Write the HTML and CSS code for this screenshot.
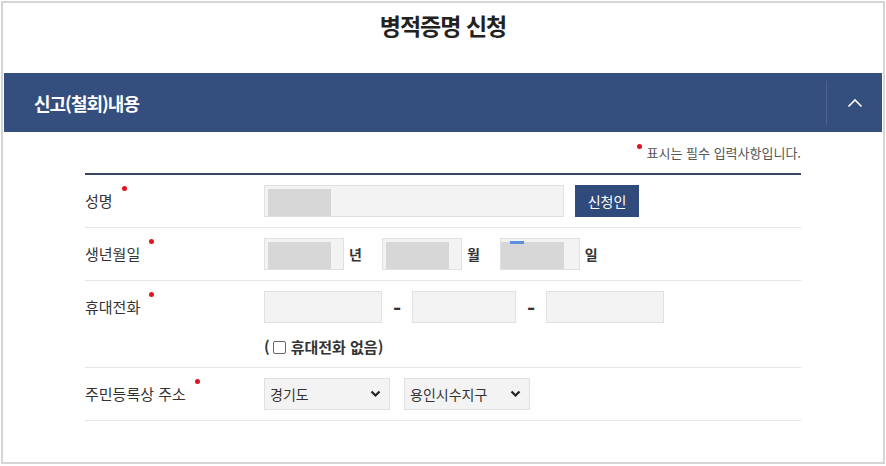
FILE: index.html
```html
<!DOCTYPE html>
<html lang="ko">
<head>
    <meta charset="UTF-8">
    <title>병적증명 신청</title>
    <link rel="stylesheet" href="styles.css">
</head>
<body>
    <div class="page-frame">
        <h1 class="page-title">병적증명 신청</h1>

        <div class="section-bar">
            <h2 class="section-title">신고(철회)내용</h2>
            <button class="toggle-btn" type="button">
                <svg width="16" height="10" viewBox="0 0 16 10"><path d="M1.5 8.5 L8 2 L14.5 8.5" fill="none" stroke="#fff" stroke-width="1.6"/></svg>
            </button>
        </div>

        <div class="form-area">
            <p class="required-note"><span class="req-dot"></span>표시는 필수 입력사항입니다.</p>

            <div class="form-row">
                <div class="form-label"><span class="req">성명</span></div>
                <div class="form-field">
                    <div class="text-input wide"><span class="mask"></span></div>
                    <button class="btn-applicant" type="button">신청인</button>
                </div>
            </div>

            <div class="form-row">
                <div class="form-label"><span class="req">생년월일</span></div>
                <div class="form-field">
                    <div class="text-input short"><span class="mask"></span></div>
                    <span class="unit">년</span>
                    <div class="text-input short"><span class="mask"></span></div>
                    <span class="unit">월</span>
                    <div class="text-input short flush"><span class="mask"><span class="caret-mark"></span></span></div>
                    <span class="unit">일</span>
                </div>
            </div>

            <div class="form-row">
                <div class="form-label"><span class="req">휴대전화</span></div>
                <div class="form-field column">
                    <div class="phone-line">
                        <div class="text-input phone-a"></div>
                        <span class="dash">-</span>
                        <div class="text-input phone-b"></div>
                        <span class="dash">-</span>
                        <div class="text-input phone-a"></div>
                    </div>
                    <label class="no-phone">(<span class="check-box"></span>휴대전화 없음)</label>
                </div>
            </div>

            <div class="form-row">
                <div class="form-label"><span class="req">주민등록상 주소</span></div>
                <div class="form-field">
                    <div class="select-box">
                        <span>경기도</span>
                        <svg width="11" height="8" viewBox="0 0 11 8"><path d="M1.5 1.5 L5.5 5.5 L9.5 1.5" fill="none" stroke="#222" stroke-width="2.2"/></svg>
                    </div>
                    <div class="select-box">
                        <span>용인시수지구</span>
                        <svg width="11" height="8" viewBox="0 0 11 8"><path d="M1.5 1.5 L5.5 5.5 L9.5 1.5" fill="none" stroke="#222" stroke-width="2.2"/></svg>
                    </div>
                </div>
            </div>
        </div>
    </div>
</body>
</html>
```

FILE: styles.css
```css
body {
    margin: 0;
    padding: 0;
    font-family: "Noto Sans CJK KR", "Noto Sans", sans-serif;
    color: #333;
    background: #fff;
}

.page-frame {
    margin: 1px 1px 0 1px;
    height: 463px;
    box-sizing: border-box;
    border: 2px solid #d5d5d5;
    padding: 0 1px 0 1px;
    overflow: hidden;
}

.page-title {
    margin: 0;
    height: 70px;
    padding-top: 6px;
    box-sizing: border-box;
    text-align: center;
    font-size: 23px;
    line-height: 32px;
    font-weight: 700;
    letter-spacing: -1px;
    color: #222;
}

.section-bar {
    display: flex;
    align-items: center;
    height: 59px;
    background: #344e7d;
}

.section-title {
    flex: 1;
    margin: 0;
    padding-left: 30px;
    font-size: 18px;
    font-weight: 700;
    letter-spacing: -1px;
    color: #fff;
}

.toggle-btn {
    width: 56px;
    height: 44px;
    padding: 0;
    border: none;
    border-left: 1px solid #4b628c;
    background: none;
    display: flex;
    align-items: center;
    justify-content: center;
    cursor: pointer;
}

.form-area {
    width: 716px;
    margin: 0 auto;
}

.required-note {
    margin: 0;
    padding: 11px 0 10px;
    line-height: 20px;
    text-align: right;
    font-size: 13px;
    color: #555;
    border-bottom: 2px solid #3b4760;
}

.req-dot {
    display: inline-block;
    width: 5px;
    height: 5px;
    margin-right: 5px;
    border-radius: 50%;
    background: #e0141e;
    vertical-align: 9px;
}

.form-row {
    display: flex;
    padding: 10px 0;
    border-bottom: 1px solid #e6e6e6;
}

.form-label {
    width: 179px;
    flex-shrink: 0;
    line-height: 32px;
    font-size: 15px;
    color: #333;
}

.req {
    position: relative;
    padding-right: 14px;
}

.req::after {
    content: '';
    position: absolute;
    right: 0;
    top: -4px;
    width: 5px;
    height: 5px;
    border-radius: 50%;
    background: #e0141e;
}

.form-field {
    display: flex;
    align-items: center;
}

.form-field.column {
    flex-direction: column;
    align-items: flex-start;
}

.text-input {
    height: 32px;
    box-sizing: border-box;
    border: 1px solid #e0e0e0;
    background: #f3f3f3;
    padding: 3px 0 0 3px;
}

.text-input.flush {
    padding-left: 0;
}

.text-input.wide {
    width: 300px;
}

.text-input.short {
    width: 80px;
}

.text-input.phone-a {
    width: 118px;
}

.text-input.phone-b {
    width: 104px;
}

.mask {
    display: block;
    position: relative;
    width: 63px;
    height: 27px;
    background: #d7d7d7;
}

.caret-mark {
    position: absolute;
    left: 9px;
    top: -1px;
    width: 14px;
    height: 3px;
    background: #5b8fe0;
}

.btn-applicant {
    margin-left: 11px;
    width: 64px;
    height: 32px;
    border: none;
    background: #2f4a7b;
    color: #fff;
    font-family: inherit;
    font-size: 14px;
    cursor: pointer;
}

.unit {
    margin: 0 20px 0 5px;
    font-size: 14px;
    font-weight: 700;
    color: #333;
}

.phone-line {
    display: flex;
    align-items: center;
}

.dash {
    width: 30px;
    text-align: center;
    font-size: 22px;
    font-weight: 700;
    color: #333;
    line-height: 32px;
}

.no-phone {
    display: flex;
    align-items: center;
    margin-top: 14px;
    line-height: 20px;
    font-size: 15px;
    font-weight: 700;
    color: #333;
}

.check-box {
    width: 11px;
    height: 11px;
    margin: 0 5px 0 3px;
    border: 1px solid #666;
    border-radius: 2px;
    background: #fff;
}

.select-box {
    display: flex;
    align-items: center;
    justify-content: space-between;
    width: 126px;
    height: 32px;
    box-sizing: border-box;
    margin-right: 14px;
    padding: 0 8px 0 5px;
    border: 1px solid #e0e0e0;
    background: #f3f3f3;
    font-size: 14px;
    color: #333;
}
```
